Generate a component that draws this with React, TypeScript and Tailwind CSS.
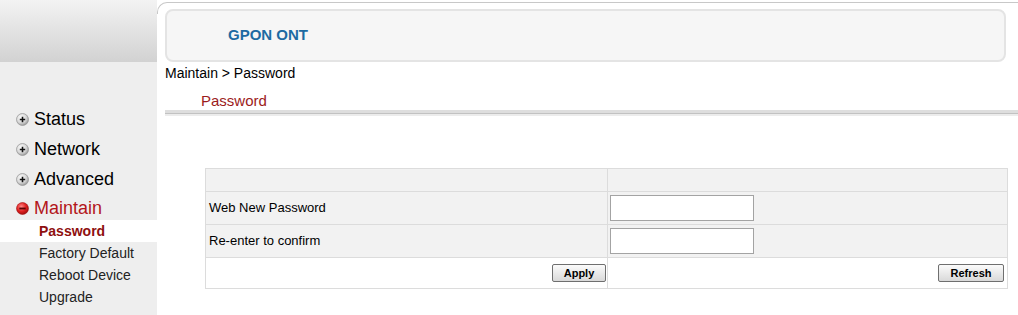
import React from "react";

const font = { fontFamily: '"Liberation Sans", Arial, sans-serif' };

const PlusIcon = () => (
  <svg width="13" height="13" viewBox="0 0 13 13" className="shrink-0">
    <defs>
      <radialGradient id="gp" cx="40%" cy="35%" r="70%">
        <stop offset="0%" stopColor="#ffffff" />
        <stop offset="60%" stopColor="#d6d6d6" />
        <stop offset="100%" stopColor="#8c8c8c" />
      </radialGradient>
    </defs>
    <circle cx="6.5" cy="6.5" r="6" fill="url(#gp)" stroke="#9a9a9a" strokeWidth="0.8" />
    <path d="M3.8 6.5h5.4M6.5 3.8v5.4" stroke="#111" strokeWidth="1.6" />
  </svg>
);

const MinusIcon = () => (
  <svg width="13" height="13" viewBox="0 0 13 13" className="shrink-0">
    <defs>
      <radialGradient id="rp" cx="40%" cy="35%" r="70%">
        <stop offset="0%" stopColor="#ff8a8a" />
        <stop offset="55%" stopColor="#e02020" />
        <stop offset="100%" stopColor="#9a0a0a" />
      </radialGradient>
    </defs>
    <circle cx="6.5" cy="6.5" r="6" fill="url(#rp)" stroke="#a01010" strokeWidth="0.6" />
    <path d="M3.3 6.5h6.4" stroke="#5a0505" strokeWidth="1.8" />
  </svg>
);

const menu = ["Status", "Network", "Advanced"];
const sub = ["Factory Default", "Reboot Device", "Upgrade"];

const Button = ({ label, w }: { label: string; w: string }) => (
  <button
    type="button"
    className={`${w} h-[18px] border border-[#6f6f6f] rounded-[2px] bg-gradient-to-b from-[#fbfbfb] to-[#d9d9d9] text-[11px] font-bold text-black leading-[16px]`}
  >
    {label}
  </button>
);

export default function App() {
  return (
    <div className="flex w-[1018px] h-[315px] overflow-hidden bg-white" style={font}>
      {/* sidebar */}
      <div className="w-[157px] shrink-0 bg-[#eeeeee] flex flex-col">
        <div className="h-[62px] bg-gradient-to-b from-[#f3f3f3] to-[#d2d2d2]" />
        <div className="h-[42px]" />
        {menu.map((m) => (
          <div key={m} className="h-[30px] flex items-center pl-[16px] gap-[5px] text-[18px] text-black">
            <PlusIcon />
            <span>{m}</span>
          </div>
        ))}
        <div className="h-[26px] flex items-start pl-[16px] gap-[5px] text-[18px] leading-[28px] text-[#b3161b]">
          <span className="h-[28px] flex items-center">
            <MinusIcon />
          </span>
          <span>Maintain</span>
        </div>
        <div className="h-[22px] bg-white pl-[39px] text-[14px] leading-[22px] font-bold text-[#8e0f0f]">
          Password
        </div>
        {sub.map((s) => (
          <div key={s} className="h-[22px] pl-[39px] text-[14px] leading-[22px] text-[#222]">
            {s}
          </div>
        ))}
      </div>

      {/* main */}
      <div className="flex-1 flex flex-col relative">
        <div className="absolute left-0 top-[2px] w-[14px] h-[12px] border-t border-l border-[#c8c8c8] rounded-tl-[10px]" />
        <div className="h-[2px]" />
        <div className="h-px bg-[#c8c8c8] ml-[12px]" />
        <div className="pl-[8px] pr-[12px] pt-[6px]">
          <div className="h-[53px] rounded-[8px] border-2 border-[#e4e4e4] bg-[#f6f6f6] flex items-center pl-[61px]">
            <span className="text-[15px] font-bold text-[#1d6aa2]">GPON ONT</span>
          </div>
        </div>
        <div className="pl-[8px] h-[20px] mt-px text-[14px] leading-[20px] text-black">Maintain &gt; Password</div>
        <div className="pl-[44px] h-[27px] pt-[8px] text-[15px] leading-[20px] text-[#9b1b1b]">Password</div>
        <div className="ml-[8px] h-[7px] flex flex-col">
          <div className="h-[3px] bg-[#dedede]" />
          <div className="h-px bg-[#c2c2c2]" />
          <div className="h-[2px] bg-[#ececec]" />
        </div>

        <div className="pl-[48px] pr-[10px] pt-[51px]">
          <table className="w-full border-collapse text-[13px] text-black">
            <colgroup>
              <col className="w-[402px]" />
              <col />
            </colgroup>
            <tbody>
              <tr className="h-[23px] bg-[#f2f2f2]">
                <td className="border border-[#dcdcdc]" />
                <td className="border border-[#dcdcdc]" />
              </tr>
              <tr className="h-[33px] bg-[#f2f2f2]">
                <td className="border border-[#dcdcdc] pl-[3px]">Web New Password</td>
                <td className="border border-[#dcdcdc] pl-[2px]">
                  <input type="password" className="block w-[144px] h-[26px] bg-white border border-[#a3a3a3] outline-none" />
                </td>
              </tr>
              <tr className="h-[33px] bg-[#f2f2f2]">
                <td className="border border-[#dcdcdc] pl-[3px]">Re-enter to confirm</td>
                <td className="border border-[#dcdcdc] pl-[2px]">
                  <input type="password" className="block w-[144px] h-[26px] bg-white border border-[#a3a3a3] outline-none" />
                </td>
              </tr>
              <tr className="h-[31px] bg-white">
                <td className="border border-[#dcdcdc] text-right pr-[1px]">
                  <Button label="Apply" w="w-[54px]" />
                </td>
                <td className="border border-[#dcdcdc] text-right pr-[3px]">
                  <Button label="Refresh" w="w-[66px]" />
                </td>
              </tr>
            </tbody>
          </table>
        </div>
      </div>
    </div>
  );
}
